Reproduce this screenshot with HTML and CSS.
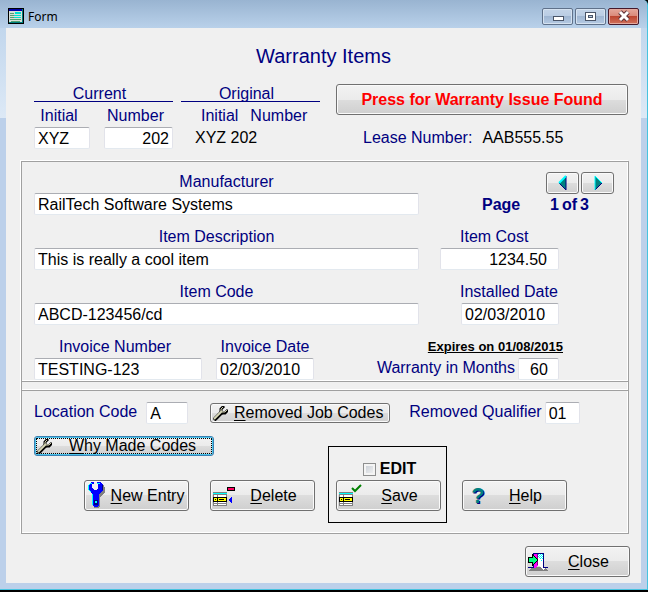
FILE: index.html
```html
<!DOCTYPE html>
<html lang="en">
<head>
  <meta charset="UTF-8" />
  <meta name="viewport" content="width=device-width, initial-scale=1.0"/>
  <title>Form</title>
  <link rel="stylesheet" href="styles.css">
</head>
<body>

  <!-- Shared icons -->
  <svg class="sprites" aria-hidden="true">
    <symbol id="wrench" viewBox="0 0 15 15">
      <path d="M1 14 L9 6" stroke="#000" stroke-width="4"/>
      <path d="M8 7 V3 L11 0 M8 7 H12 L15 4" stroke="#000" stroke-width="3" fill="none"/>
      <path d="M1 13 L9 5" stroke="#d8d8b8" stroke-width="2"/>
      <path d="M8 6 V3 L10 1 M9 6 H12 L14 4" stroke="#c8c8a8" stroke-width="1" fill="none"/>
    </symbol>
    <symbol id="grid" viewBox="0 0 14 14">
      <rect width="14" height="14" fill="#808080"/>
      <rect y="1" width="14" height="1" fill="#00ffff"/>
      <path d="M1 3h3v2h-3z M5 3h8v2h-8z M1 10h3v1h-3z M5 10h8v1h-8z M1 12h3v1h-3z M5 12h8v1h-8z" fill="#fff"/>
      <rect y="5" width="14" height="5" fill="#000"/>
      <path d="M1 6h3v3h-3z M5 6h8v3h-8z" fill="#ffff00"/>
      <path d="M2 7h1v1h-1z M6 7h5v1h-5z" fill="#000"/>
    </symbol>
  </svg>

  <div class="window">
    <!-- Title bar -->
    <header class="titlebar">
      <svg class="app-icon" width="16" height="16" viewBox="0 0 16 16" shape-rendering="crispEdges">
        <rect width="16" height="16" fill="#000"/>
        <rect x="1" y="3" width="13" height="12" fill="#d8e0d8"/>
        <rect x="1" y="1" width="13" height="2" fill="#0000a8"/>
        <path d="M14 1h1v14h-14v-1h13z" fill="#008080"/>
        <path d="M2 5h4v1h-4z M2 7h4v1h-4z M2 9h5v1h-5z M2 11h11v1h-11z M3 13h9v1h-9z" fill="#50a070"/>
        <path d="M7 4h6v2h-6z M6 7h7v1h-7z M6 9h7v1h-7z" fill="#00e0d0"/>
      </svg>
      <span class="caption">Form</span>
      <div class="window-buttons">
        <button class="win-btn" aria-label="Minimize">
          <svg width="12" height="12" viewBox="0 0 12 12" shape-rendering="crispEdges"><path d="M1 6h11v5h-11z" fill="#4a5568"/><path d="M2 7h9v3h-9z" fill="#fff"/></svg>
        </button>
        <button class="win-btn" aria-label="Maximize">
          <svg width="12" height="12" viewBox="0 0 12 12" shape-rendering="crispEdges"><path d="M0 2h11v9h-11z" fill="#4a5568"/><path d="M1 3h9v7h-9z" fill="#fff"/><path d="M3 5h5v3h-5z" fill="#4a5568"/><path d="M4 6h3v1h-3z" fill="#b5c8df"/></svg>
        </button>
        <button class="win-btn win-close" aria-label="Close window">
          <svg width="12" height="12" viewBox="0 0 12 12"><path d="M2 2 L10 10 M10 2 L2 10" stroke="#5a3038" stroke-width="5"/><path d="M2 2 L10 10 M10 2 L2 10" stroke="#fff" stroke-width="3"/></svg>
        </button>
      </div>
    </header>

    <main>
      <h1>Warranty Items</h1>

      <div class="top">
        <div class="car">
          <div class="heading">Current</div>
          <div class="pair">
            <div class="field initial">
              <label class="shift" for="initial">Initial</label>
              <input id="initial" type="text" value="XYZ">
            </div>
            <div class="field grow">
              <label class="shift" for="number">Number</label>
              <input id="number" class="right" type="text" value="202">
            </div>
          </div>
        </div>

        <div class="car">
          <div class="heading">Original</div>
          <div class="original-labels"><span>Initial</span><span>Number</span></div>
          <div class="original-value">XYZ 202</div>
        </div>

        <div class="issue">
          <button class="btn issue-btn">Press for Warranty Issue Found</button>
          <div class="lease"><span class="navy">Lease Number:</span><span>AAB555.55</span></div>
        </div>
      </div>

      <div class="panel">
        <!-- Item -->
        <section class="item">
          <div class="row">
            <div class="field grow">
              <label for="manufacturer">Manufacturer</label>
              <input id="manufacturer" type="text" value="RailTech Software Systems">
            </div>
            <div class="side pager">
              <div class="arrows">
                <button class="btn arrow" aria-label="Previous page">
                  <svg width="10" height="16" viewBox="0 0 10 16"><path d="M8 1 L1 8 L8 15z" fill="#008080"/><path d="M1 8 L8 15 V1" stroke="#000080" fill="none"/><path d="M8 1 L1 8" stroke="#00ffff" stroke-width="2"/></svg>
                </button>
                <button class="btn arrow" aria-label="Next page">
                  <svg width="10" height="16" viewBox="0 0 10 16"><path d="M2 1 L9 8 L2 15z" fill="#008080"/><path d="M9 8 L2 15" stroke="#000080"/><path d="M2 15 V1 L9 8" stroke="#00ffff" fill="none"/></svg>
                </button>
              </div>
              <div class="page"><span class="page-word">Page</span><span>1</span><span>of</span><span>3</span></div>
            </div>
          </div>

          <div class="row">
            <div class="field grow">
              <label class="shift-wide" for="description">Item Description</label>
              <input id="description" type="text" value="This is really a cool item">
            </div>
            <div class="side field">
              <label class="side-label" for="cost">Item Cost</label>
              <input id="cost" class="cost" type="text" value="1234.50">
            </div>
          </div>

          <div class="row">
            <div class="field grow">
              <label class="shift-wide" for="code">Item Code</label>
              <input id="code" type="text" value="ABCD-123456/cd">
            </div>
            <div class="side field">
              <label class="side-label" for="installed">Installed Date</label>
              <input id="installed" class="installed" type="text" value="02/03/2010">
            </div>
          </div>

          <div class="row invoice">
            <div class="field invoice-number">
              <label class="shift" for="invoice">Invoice Number</label>
              <input id="invoice" type="text" value="TESTING-123">
            </div>
            <div class="field date">
              <label for="invoice-date">Invoice Date</label>
              <input id="invoice-date" type="text" value="02/03/2010">
            </div>
            <div class="warranty">
              <div class="expires">Expires on 01/08/2015</div>
              <div class="months">
                <label for="months">Warranty in Months</label>
                <input id="months" type="text" value="60">
              </div>
            </div>
          </div>
        </section>

        <!-- Codes and actions -->
        <section class="codes">
          <div class="code-row">
            <label for="location">Location Code</label>
            <input id="location" class="location" type="text" value="A">
            <button class="btn code-btn"><svg class="wrench"><use href="#wrench"/></svg><span><u>R</u>emoved Job Codes</span></button>
            <label for="qualifier">Removed Qualifier</label>
            <input id="qualifier" class="qualifier" type="text" value="01">
          </div>
          <button class="btn code-btn focused"><svg class="wrench"><use href="#wrench"/></svg><span><u>W</u>hy Made Codes</span></button>

          <div class="actions">
            <button class="btn action">
              <svg class="icon" viewBox="0 0 20 27" shape-rendering="crispEdges">
                <path d="M15 3h2v2h1v5l-5 5v9l-2 2h-4v-2h4v-12l4 -4z" fill="#808080"/>
                <path d="M4 0h3v2h-2v4l2 2h2l2 -2v-4h-1v-2h3l3 3v5l-4 4v11l-2 2h-3l-2 -2v-11l-4 -4v-5z" fill="#0000ff"/>
                <path d="M3 1h2v1h-2z M1 3h1v5h-1z M2 2h1v1h-1z M2 8h1v1h-1z M3 9h1v1h-1z M5 12h1v11h-1z M10 1h3v1h-3z" fill="#00ffff"/>
                <path d="M15 3h1v5h-1z M7 18h4v5h-4z" fill="#000080"/>
                <path d="M8 19h2v2h-2z" fill="#00ffff"/>
              </svg>
              <span><u>N</u>ew Entry</span>
            </button>
            <button class="btn action">
              <svg class="icon" viewBox="0 0 20 27" shape-rendering="crispEdges">
                <use href="#grid" y="10" width="14" height="14"/>
                <rect x="14" y="5" width="8" height="4" fill="#000"/>
                <rect x="15" y="6" width="6" height="2" fill="#ff0060"/>
                <path d="M16 17h1v-1h1v-1h1v6h-1v-1h-1v-1h-1z" fill="#0000ff"/>
              </svg>
              <span><u>D</u>elete</span>
            </button>
            <div class="edit-box">
              <label class="edit"><input type="checkbox">EDIT</label>
              <button class="btn action">
                <svg class="icon" viewBox="0 0 20 27">
                  <use href="#grid" y="10" width="14" height="14" shape-rendering="crispEdges"/>
                  <path d="M13 6 L16 9 L22 3" stroke="#008000" stroke-width="2" fill="none"/>
                </svg>
                <span><u>S</u>ave</span>
              </button>
            </div>
            <button class="btn action">
              <span class="icon help-mark" aria-hidden="true">?</span>
              <span><u>H</u>elp</span>
            </button>
          </div>
        </section>
      </div>

      <div class="footer">
        <button class="btn action">
          <svg class="icon" viewBox="0 0 20 27" shape-rendering="crispEdges">
            <path d="M0 23 L5 19 H13 L15 22 L17 20 L20 23z" fill="#808080"/>
            <rect x="5" y="5" width="11" height="1" fill="#000080"/>
            <path d="M10 6h5v10l2 4l-2 2l-3 -4h-2z" fill="#fff"/>
            <path d="M10 6h1v1h-1z M12 6h1v1h-1z M14 6h1v1h-1z M11 7h1v1h-1z M13 7h1v1h-1z M10 8h1v1h-1z M12 8h1v1h-1z M14 8h1v1h-1z M11 9h1v1h-1z M13 9h1v1h-1z M12 10h1v1h-1z M14 10h1v1h-1z M13 12h1v1h-1z" fill="#00ffff"/>
            <path d="M5 6h5v11l-3 3h-2z" fill="#ff00ff"/>
            <path d="M9 6h1v11h-1z" fill="#800080"/>
            <path d="M15 5h1v14h4v1h-5z M0 19h5v1h-5z M5 5h1v3h-1z M5 16h1v4h-1z" fill="#000080"/>
            <path d="M0 9h4v-3l6 6l-6 6v-3h-4z" fill="#000"/>
            <path d="M1 10h4v-2l4 4l-4 4v-2h-4z" fill="#00ff80"/>
          </svg>
          <span><u>C</u>lose</span>
        </button>
      </div>
    </main>
  </div>

</body>
</html>
```
FILE: styles.css
```css
* {
  box-sizing: border-box;
}

body {
  font-family: "Liberation Sans", Arial, sans-serif;
  font-size: 16px;
  line-height: 18px;
  background: #000;
  color: #000;
  margin: 0;
}

.sprites {
  display: none;
}

.window {
  background: linear-gradient(#b9d1ea, #dde9f6 118px, #bcd0ea 118px);
  border-right: 1px solid #46c3df;
  border-bottom: 1px solid #46c3df;
  border-top-right-radius: 5px;
  padding: 0 6px 6px;
}

/* Title bar */
.titlebar {
  display: flex;
  align-items: center;
  height: 28px;
  margin: 0 -6px;
  padding: 4px 8px 0;
  background: linear-gradient(#99b4d1, #b9d1ea);
  border-top-right-radius: 5px;
}

.caption {
  flex: 1;
  margin-left: 4px;
  padding-top: 2px;
  font-family: "Noto Sans", "Open Sans", sans-serif;
  font-size: 12px;
}

.window-buttons {
  display: flex;
  gap: 2px;
}

.win-btn {
  display: flex;
  align-items: center;
  justify-content: center;
  width: 31px;
  height: 17px;
  padding: 0;
  border: 1px solid #5f718a;
  border-radius: 2px;
  background: linear-gradient(#c3d4e8, #b9cce3 50%, #9fb6d2 50%, #b5cae3);
  box-shadow: inset 0 0 0 1px #d5e2f0;
}

.win-close {
  border-color: #45182a;
  background: linear-gradient(#e5a79b, #d98777 50%, #bd4631 50%, #d0715c);
  box-shadow: inset 0 0 0 1px #e4a99e;
}

main {
  background: #f0f0f0;
  padding: 16px 0 6px;
}

h1 {
  margin: 0 0 16px;
  font-size: 20px;
  font-weight: normal;
  line-height: 24px;
  text-align: center;
  color: #000080;
}

label,
.heading,
.original-labels,
.navy {
  color: #000080;
}

label {
  line-height: 20px;
}

input[type="text"] {
  width: 100%;
  height: 22px;
  padding: 2px 3px 0;
  border: 1px solid #e2e3ea;
  border-top-color: #abadb3;
  border-bottom-color: #e3e9ef;
  border-radius: 2px;
  background: #fff;
  color: #000;
  font: inherit;
}

.right {
  text-align: right;
}

.field {
  display: flex;
  flex-direction: column;
  gap: 1px;
}

.field label {
  text-align: center;
}

.field .shift {
  padding-right: 6px;
}

.field .shift-wide {
  padding-right: 20px;
}

.grow {
  flex: 1;
  min-width: 0;
}

/* Buttons */
.btn {
  display: flex;
  align-items: center;
  padding: 0 0 0 2px;
  border: 1px solid #707070;
  border-radius: 3px;
  background: linear-gradient(#f2f2f2, #ebebeb 50%, #dddddd 50%, #cfcfcf);
  box-shadow: inset 0 0 0 1px #fafafa;
  color: #000;
  font: inherit;
}

.btn > span:last-child {
  flex: 1;
  text-align: center;
  white-space: nowrap;
}

u {
  text-underline-offset: 2px;
}

/* Top block */
.top {
  display: flex;
  padding: 0 13px 0 28px;
}

.car {
  width: 139px;
  margin-right: 8px;
}

.heading {
  height: 18px;
  margin-bottom: 4px;
  padding-right: 8px;
  border-bottom: 1px solid #000080;
  line-height: 20px;
  text-align: center;
}

.pair {
  display: flex;
  gap: 14px;
}

.initial {
  width: 56px;
}

.original-labels {
  display: flex;
  gap: 12px;
  padding-left: 20px;
  line-height: 20px;
}

.original-value {
  margin-top: 3px;
  padding-left: 14px;
}

.issue {
  flex: 1;
  margin-left: 8px;
}

.issue-btn {
  justify-content: center;
  width: 100%;
  height: 31px;
  padding: 0;
  color: #ff0000;
  font-weight: bold;
}

.lease {
  display: flex;
  gap: 10px;
  margin-top: 14px;
  padding-left: 27px;
}

/* Panel */
.panel {
  margin: 12px 12px 12px 15px;
  border: 1px solid #a0a0a0;
  box-shadow: -1px -1px 0 #fff, inset -1px -1px 0 #fff;
}

.item {
  display: flex;
  flex-direction: column;
  gap: 12px;
  padding: 10px 14px 1px 12px;
  border-bottom: 1px solid #a0a0a0;
  box-shadow: inset 0 -1px 0 #fff;
}

.row {
  display: flex;
  gap: 21px;
}

.side {
  width: 174px;
}

.pager {
  display: flex;
  flex-direction: column;
  gap: 1px;
}

.arrows {
  display: flex;
  justify-content: flex-end;
  gap: 2px;
}

.arrow {
  justify-content: center;
  width: 33px;
  height: 22px;
  padding: 0;
}

.page {
  display: flex;
  gap: 3px;
  padding-left: 42px;
  color: #000080;
  font-weight: bold;
  line-height: 20px;
}

.page-word {
  width: 65px;
}

.field .side-label {
  padding-left: 20px;
  text-align: left;
}

.field .cost {
  width: 119px;
  padding-right: 11px;
  text-align: right;
}

.field .installed {
  width: 98px;
  margin-left: 21px;
}

.invoice {
  gap: 14px;
}

.invoice-number {
  width: 168px;
}

.date {
  width: 98px;
}

.warranty {
  display: flex;
  flex-direction: column;
  gap: 1px;
  margin-left: auto;
  padding-right: 51px;
}

.expires {
  font-size: 13px;
  font-weight: bold;
  line-height: 20px;
  text-align: right;
  text-decoration: underline;
  text-decoration-thickness: 1px;
}

.months {
  display: flex;
  justify-content: flex-end;
  gap: 3px;
  padding-right: 4px;
  white-space: nowrap;
}

.months input[type="text"] {
  width: 41px;
  padding-left: 11px;
}

/* Codes */
.codes {
  margin-top: 8px;
  padding: 11px 12px 10px;
  border-top: 1px solid #a0a0a0;
  box-shadow: 0 -1px 0 #fff;
}

.code-row {
  display: flex;
  margin-bottom: 12px;
  white-space: nowrap;
}

.code-row .location {
  width: 42px;
  margin: 0 22px 0 9px;
}

.code-row .qualifier {
  width: 35px;
  margin-left: 3px;
}

.code-row .code-btn {
  margin: 1px 19px 0 0;
}

.code-btn {
  width: 180px;
  height: 20px;
}

.focused {
  border-color: #3c7fb1;
  box-shadow: inset 0 0 0 1px #48c4ec;
  outline: 1px dotted #000;
  outline-offset: -3px;
}

.wrench {
  width: 15px;
  height: 15px;
}

.actions {
  display: flex;
  align-items: flex-end;
  margin-top: -10px;
  padding-left: 50px;
}

.action {
  width: 105px;
  height: 31px;
}

.actions > .action {
  margin: 0 0 12px;
}

.actions > .action + .action {
  margin-left: 21px;
}

.icon {
  width: 20px;
  height: 27px;
  overflow: visible;
}

.help-mark {
  padding-left: 6px;
  color: #008080;
  font-size: 22px;
  font-weight: bold;
  line-height: 27px;
  text-shadow: 1px 1px 0 #000080;
}

.edit-box {
  width: 119px;
  margin: 0 15px 0 13px;
  padding: 12px 7px 11px;
  border: 1px solid #000;
}

.edit {
  display: flex;
  align-items: center;
  justify-content: center;
  gap: 4px;
  margin-bottom: 1px;
  padding-left: 4px;
  color: #000;
  font-weight: bold;
}

.edit input {
  appearance: none;
  width: 13px;
  height: 13px;
  margin: 0;
  border: 1px solid #8e8f8f;
  background: linear-gradient(135deg, #c4cad2, #f6f6f6);
  box-shadow: inset 0 0 0 2px #f4f4f4;
}

.footer {
  display: flex;
  justify-content: flex-end;
  padding-right: 11px;
}
```
